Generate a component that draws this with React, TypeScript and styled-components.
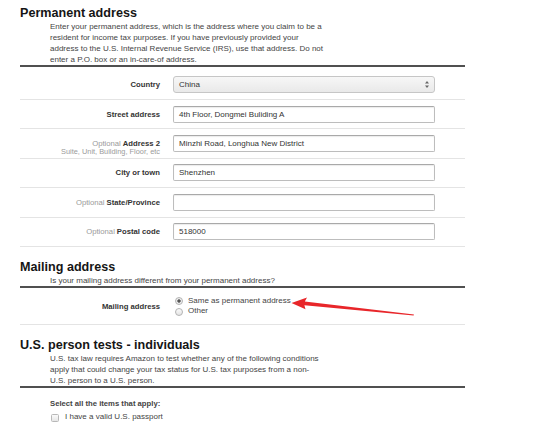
import React from "react";
import styled, { createGlobalStyle } from "styled-components";

const GlobalStyle = createGlobalStyle`
  body {
    margin: 0;
    background: #fff;
    font-family: "Liberation Sans", Arial, sans-serif;
    color: #333;
  }
`;

const Page = styled.div`
  position: relative;
  width: 558px;
  height: 435px;
  overflow: hidden;
`;

const Content = styled.div`
  width: 445px;
  padding-left: 20px;
`;

const Section = styled.section<{ $top: number }>`
  margin-top: ${(p) => p.$top}px;
`;

const Title = styled.h2`
  margin: 0;
  font-size: 12.6px;
  line-height: 15px;
  font-weight: bold;
  color: #151515;
`;

const Intro = styled.p`
  margin: 0;
  padding-left: 30px;
  font-size: 8px;
  line-height: 11px;
  color: #444;
  border-bottom: 2px solid #505050;
  white-space: nowrap;
`;

const Row = styled.div<{ $first?: boolean }>`
  display: flex;
  align-items: flex-start;
  height: ${(p) => (p.$first ? 33 : 29.4)}px;
  box-sizing: border-box;
  padding-top: ${(p) => (p.$first ? 9 : 5.7)}px;
  border-bottom: 1px solid #e4e4e4;
`;

const MailRow = styled.div`
  display: flex;
  align-items: center;
  padding: 8px 0 7px;
  border-bottom: 1px solid #e4e4e4;
`;

const LabelCol = styled.div`
  width: 140px;
  flex: none;
  text-align: right;
  white-space: nowrap;
`;

const Label = styled.div`
  font-size: 7.7px;
  line-height: 17px;
  font-weight: bold;
  color: #333;
`;

const Optional = styled.span`
  font-weight: normal;
  color: #9a9a9a;
  margin-right: 2px;
`;

const Hint = styled.div`
  margin-top: -5px;
  font-size: 7.4px;
  line-height: 9px;
  color: #9a9a9a;
`;

const Control = styled.div`
  margin-left: 13px;
`;

const TextBox = styled.div`
  width: 262px;
  height: 17px;
  box-sizing: border-box;
  border: 1px solid #bdbdbd;
  border-top-color: #a9a9a9;
  border-radius: 2px;
  box-shadow: inset 0 1px 1px rgba(0, 0, 0, 0.08);
  background: #fff;
  padding-left: 5px;
  font-size: 8px;
  line-height: 15px;
  color: #333;
  white-space: nowrap;
`;

const SelectBox = styled(TextBox)`
  display: flex;
  justify-content: space-between;
  align-items: center;
  border-color: #c6c6c6;
  border-radius: 3px;
  box-shadow: none;
  background: linear-gradient(#f7f7f7, #e9e9e9);
  padding-right: 5px;
`;

const Options = styled.div`
  display: flex;
  flex-direction: column;
  margin-left: 2px;
`;

const Choice = styled.div`
  display: flex;
  align-items: center;
  gap: 5px;
  font-size: 8px;
  line-height: 10.5px;
  color: #444;
`;

const Radio = styled.span<{ $checked?: boolean }>`
  width: 6px;
  height: 6px;
  border-radius: 50%;
  border: 1px solid #b3b3b3;
  background: ${(p) =>
    p.$checked
      ? "radial-gradient(circle, #555 0 1.4px, #eee 1.9px)"
      : "linear-gradient(#fafafa, #e4e4e4)"};
`;

const Note = styled.div`
  padding-left: 30px;
`;

const Strong = styled.div`
  margin-top: 10.5px;
  font-size: 7.7px;
  line-height: 11px;
  font-weight: bold;
  color: #444;
`;

const CheckLine = styled(Choice)`
  margin-top: 3px;
  gap: 6px;
  margin-left: 1px;
`;

const Box = styled.span`
  width: 6px;
  height: 6px;
  border: 1px solid #b8b8b8;
  border-radius: 1.5px;
  background: linear-gradient(#fafafa, #e6e6e6);
`;

const Overlay = styled.svg`
  position: absolute;
  left: 0;
  top: 0;
  pointer-events: none;
`;

const Arrows = () => (
  <svg width="4" height="7" viewBox="0 0 4 7">
    <path d="M2 0 L4 2.6 H0 Z M2 7 L0 4.4 H4 Z" fill="#666" />
  </svg>
);

type Field = { label: string; value: string; optional?: boolean; hint?: string };

const fields: Field[] = [
  { label: "Street address", value: "4th Floor, Dongmei Buliding A" },
  {
    label: "Address 2",
    value: "Minzhi Road, Longhua New District",
    optional: true,
    hint: "Suite, Unit, Building, Floor, etc",
  },
  { label: "City or town", value: "Shenzhen" },
  { label: "State/Province", value: "", optional: true },
  { label: "Postal code", value: "518000", optional: true },
];

export default function App() {
  return (
    <Page>
      <GlobalStyle />
      <Content>
        <Section $top={6}>
          <Title>Permanent address</Title>
          <Intro>
            Enter your permanent address, which is the address where you claim to be a
            <br />
            resident for income tax purposes. If you have previously provided your
            <br />
            address to the U.S. Internal Revenue Service (IRS), use that address. Do not
            <br />
            enter a P.O. box or an in-care-of address.
          </Intro>
          <Row $first>
            <LabelCol>
              <Label>Country</Label>
            </LabelCol>
            <Control>
              <SelectBox>
                <span>China</span>
                <Arrows />
              </SelectBox>
            </Control>
          </Row>
          {fields.map((f) => (
            <Row key={f.label}>
              <LabelCol>
                <Label>
                  {f.optional && <Optional>Optional</Optional>}
                  {f.label}
                </Label>
                {f.hint && <Hint>{f.hint}</Hint>}
              </LabelCol>
              <Control>
                <TextBox>{f.value}</TextBox>
              </Control>
            </Row>
          ))}
        </Section>

        <Section $top={13}>
          <Title>Mailing address</Title>
          <Intro>Is your mailing address different from your permanent address?</Intro>
          <MailRow>
            <LabelCol>
              <Label>Mailing address</Label>
            </LabelCol>
            <Control>
              <Options>
                <Choice>
                  <Radio $checked />
                  Same as permanent address
                </Choice>
                <Choice>
                  <Radio />
                  Other
                </Choice>
              </Options>
            </Control>
          </MailRow>
        </Section>

        <Section $top={13}>
          <Title>U.S. person tests - individuals</Title>
          <Intro>
            U.S. tax law requires Amazon to test whether any of the following conditions
            <br />
            apply that could change your tax status for U.S. tax purposes from a non-
            <br />
            U.S. person to a U.S. person.
          </Intro>
          <Note>
            <Strong>Select all the items that apply:</Strong>
            <CheckLine>
              <Box />I have a valid U.S. passport
            </CheckLine>
          </Note>
        </Section>
      </Content>

      <Overlay width="558" height="435">
        <polygon
          points="291.5,303 307,297.5 304.8,301.6 414,314.4 413.6,315.6 304.4,305.2 305.5,309.2"
          fill="#e8262a"
        />
      </Overlay>
    </Page>
  );
}
